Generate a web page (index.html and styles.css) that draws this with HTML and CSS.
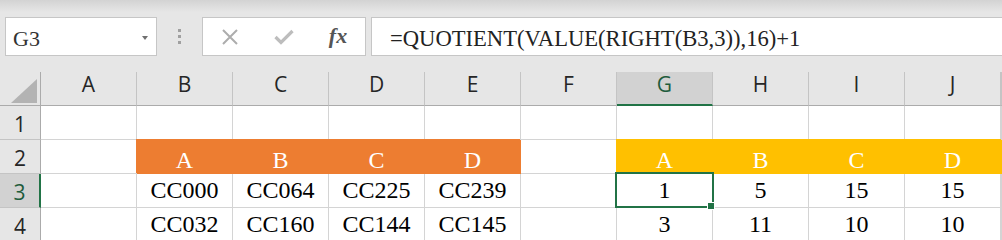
FILE: index.html
```html
<!DOCTYPE html>
<html lang="en">
<head>
    <meta charset="UTF-8">
    <title>QUOTIENT</title>
    <link rel="stylesheet" href="styles.css">
</head>
<body>
    <div class="toolbar">
        <div class="namebox">
            <span class="name">G3</span>
            <span class="arrow"></span>
        </div>
        <div class="grip">
            <span></span><span></span><span></span>
        </div>
        <div class="buttons">
            <span class="btn">
                <svg width="18" height="16" viewBox="0 0 18 16"><path d="M2 1 L16 15 M16 1 L2 15" stroke="#adadad" stroke-width="2" fill="none"/></svg>
            </span>
            <span class="btn">
                <svg width="20" height="16" viewBox="0 0 20 16"><path d="M1.5 8 L7 13.5 L18.5 2" stroke="#bdbdbd" stroke-width="3.2" fill="none"/></svg>
            </span>
            <span class="btn fx">fx</span>
        </div>
        <div class="formula">=QUOTIENT(VALUE(RIGHT(B3,3)),16)+1</div>
    </div>

    <div class="sheet">
        <div class="cell corner">
            <svg width="26" height="24" viewBox="0 0 26 24"><polygon points="26,0 26,24 0,24" fill="#b3b3b3"/></svg>
        </div>
        <div class="cell col-head">A</div>
        <div class="cell col-head">B</div>
        <div class="cell col-head">C</div>
        <div class="cell col-head">D</div>
        <div class="cell col-head">E</div>
        <div class="cell col-head">F</div>
        <div class="cell col-head active">G</div>
        <div class="cell col-head">H</div>
        <div class="cell col-head">I</div>
        <div class="cell col-head">J</div>
        <div class="cell col-head"></div>

        <div class="cell row-head">1</div>
        <div class="cell"></div><div class="cell"></div><div class="cell"></div><div class="cell"></div><div class="cell"></div>
        <div class="cell"></div><div class="cell"></div><div class="cell"></div><div class="cell"></div><div class="cell"></div>
        <div class="cell"></div>

        <div class="cell row-head">2</div>
        <div class="cell"></div>
        <div class="cell fill orange">A</div>
        <div class="cell fill orange">B</div>
        <div class="cell fill orange">C</div>
        <div class="cell fill orange">D</div>
        <div class="cell"></div>
        <div class="cell fill gold">A</div>
        <div class="cell fill gold">B</div>
        <div class="cell fill gold">C</div>
        <div class="cell fill gold">D</div>
        <div class="cell fill gold"></div>

        <div class="cell row-head active">3</div>
        <div class="cell"></div>
        <div class="cell">CC000</div>
        <div class="cell">CC064</div>
        <div class="cell">CC225</div>
        <div class="cell">CC239</div>
        <div class="cell"></div>
        <div class="cell selected">1</div>
        <div class="cell">5</div>
        <div class="cell">15</div>
        <div class="cell">15</div>
        <div class="cell"></div>

        <div class="cell row-head">4</div>
        <div class="cell"></div>
        <div class="cell">CC032</div>
        <div class="cell">CC160</div>
        <div class="cell">CC144</div>
        <div class="cell">CC145</div>
        <div class="cell"></div>
        <div class="cell">3</div>
        <div class="cell">11</div>
        <div class="cell">10</div>
        <div class="cell">10</div>
        <div class="cell"></div>
    </div>
</body>
</html>
```

FILE: styles.css
```css
body {
    margin: 0;
    background-color: #e6e6e6;
    overflow: hidden;
    font-family: 'Liberation Serif', serif;
}

/* formula bar */
.toolbar {
    height: 72px;
    box-sizing: border-box;
    padding: 17px 0 0 5px;
    display: flex;
    align-items: flex-start;
    background: linear-gradient(#d3d3d3, #e6e6e6 12px);
}

.namebox {
    width: 152px;
    height: 39px;
    box-sizing: border-box;
    border: 1px solid #c6c6c6;
    background-color: #fff;
    display: flex;
    align-items: flex-start;
    justify-content: space-between;
    padding: 3px 8px 0 7px;
}

.name {
    font-size: 22px;
    line-height: 35px;
    color: #333;
}

.arrow {
    margin-top: 15px;
    width: 0;
    height: 0;
    border-left: 3.5px solid transparent;
    border-right: 3.5px solid transparent;
    border-top: 4px solid #707070;
}

.grip {
    width: 45px;
    height: 39px;
    display: flex;
    flex-direction: column;
    align-items: center;
    justify-content: center;
    gap: 3px;
}

.grip span {
    width: 3px;
    height: 3px;
    background-color: #a0a0a0;
}

.buttons {
    width: 164px;
    height: 39px;
    box-sizing: border-box;
    border: 1px solid #c6c6c6;
    background-color: #fff;
    display: flex;
    padding-left: 0;
}

.btn {
    width: 54px;
    display: flex;
    align-items: center;
    justify-content: center;
}

.fx {
    font-style: italic;
    font-weight: bold;
    font-size: 22px;
    color: #555;
    padding-bottom: 2px;
}

.formula {
    flex: 1;
    margin-left: 5px;
    height: 39px;
    box-sizing: border-box;
    border: 1px solid #c6c6c6;
    border-right: none;
    background-color: #fff;
    padding: 3px 0 0 18px;
    font-size: 22.6px;
    line-height: 35px;
    color: #222;
    white-space: nowrap;
}

/* grid */
.sheet {
    display: grid;
    grid-template-columns: 41px repeat(10, 96px) 1fr;
    grid-auto-rows: 34px;
    background-color: #fff;
}

.cell {
    box-sizing: border-box;
    border-right: 1px solid #d4d4d4;
    border-bottom: 1px solid #d4d4d4;
    text-align: center;
    font-size: 24px;
    line-height: 33px;
    color: #000;
    white-space: nowrap;
}

.corner {
    background-color: #e6e6e6;
    border-right-color: #ababab;
    border-bottom-color: #ababab;
    display: flex;
    justify-content: flex-end;
    align-items: flex-end;
    padding: 0 3px 2px 0;
}

.col-head {
    background-color: #e6e6e6;
    border-right-color: #c4c4c4;
    border-bottom-color: #ababab;
    font-family: 'Open Sans', sans-serif;
    font-size: 21px;
    line-height: 25px;
    color: #262626;
}

.col-head.active {
    background-color: #d2d2d2;
    border-bottom: 2px solid #217346;
    color: #1e5c3c;
}

.row-head {
    background-color: #e6e6e6;
    border-right-color: #ababab;
    border-bottom-color: #c4c4c4;
    font-family: 'Open Sans', sans-serif;
    font-size: 21px;
    line-height: 36px;
    color: #262626;
}

.row-head.active {
    background-color: #d2d2d2;
    border-right: 2px solid #217346;
    color: #1e5c3c;
}

.fill {
    color: #fff;
    padding-top: 4px;
}

.orange {
    background-color: #ed7d31;
    border-color: #ed7d31;
    box-shadow: -1px -1px 0 #ed7d31;
}

.gold {
    background-color: #ffc000;
    border-color: #ffc000;
    box-shadow: -1px -1px 0 #ffc000;
}

.selected {
    position: relative;
}

.selected::before {
    content: "";
    position: absolute;
    top: -2px;
    left: -2px;
    width: 99px;
    height: 36px;
    box-sizing: border-box;
    border: 2px solid #217346;
    z-index: 1;
}

.selected::after {
    content: "";
    position: absolute;
    left: 90px;
    top: 28px;
    width: 6px;
    height: 6px;
    background-color: #217346;
    border: 1px solid #fff;
    z-index: 2;
}
```
